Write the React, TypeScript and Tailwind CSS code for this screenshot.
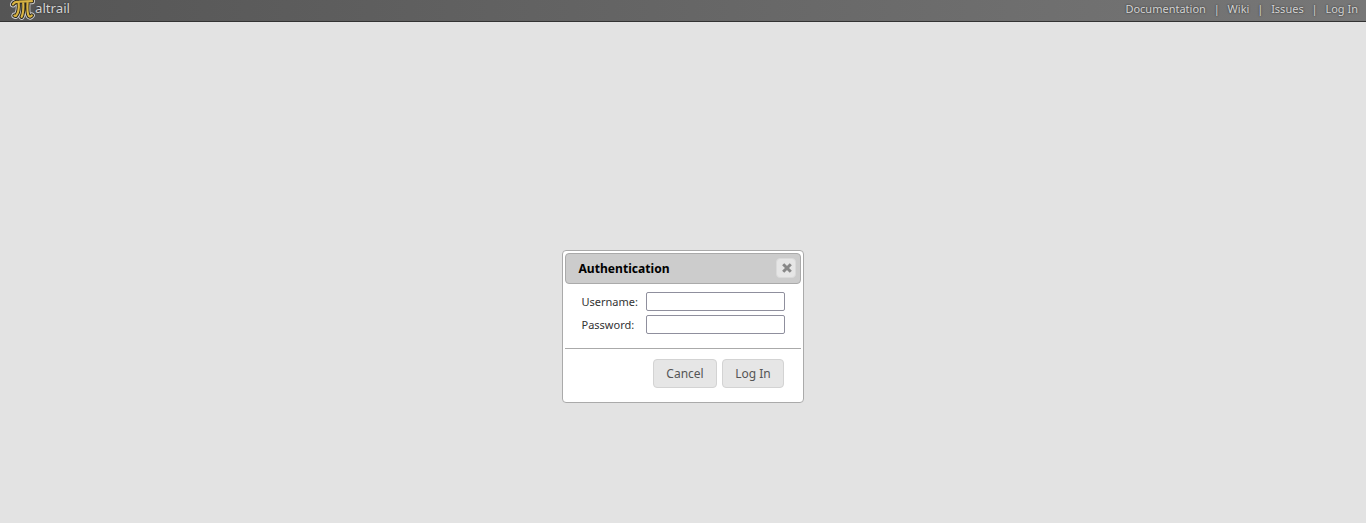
import React from "react";

const links = ["Documentation", "Wiki", "Issues", "Log In"];

function Logo() {
  const d =
    "M3 4.4 C4 2.2 6 1.6 9 1.6 L22 1.2 M8.6 1.8 C9.2 8 8.8 13 5.8 16 L4.4 15.6 M13.2 1.8 C13.6 8 13.6 13 11.6 16.8 M17.6 1.8 C17.2 8 17.2 14.4 19 16.2 C20 17 21 16.6 21.8 15.4";
  return (
    <svg width="26" height="22" viewBox="0 0 26 22" fill="none" strokeLinecap="round" strokeLinejoin="round" className="block shrink-0">
      <path d={d} stroke="#d0d0d0" strokeWidth="6" />
      <path d={d} stroke="#2b271c" strokeWidth="4.2" />
      <path d={d} stroke="#d9b443" strokeWidth="2.2" />
    </svg>
  );
}

function Field({ label, type }: { label: string; type: string }) {
  return (
    <label className="flex h-[19px] items-center text-[11px] text-[#333]">
      <span className="w-[64.5px] pt-px">{label}</span>
      <input type={type} className="h-[19px] w-[139px] rounded-[2px] border border-[#8f8f9d] bg-white px-1 outline-none" />
    </label>
  );
}

function Button({ children, className }: { children: React.ReactNode; className: string }) {
  return (
    <button className={`h-[29px] rounded-[4px] border border-[#d3d3d3] bg-[#e6e6e6] text-[12px] text-[#555] ${className}`}>
      {children}
    </button>
  );
}

export default function App() {
  return (
    <div className="flex h-[523px] flex-col overflow-hidden bg-[#e3e3e3] font-['Noto_Sans',sans-serif]">
      <header className="flex h-[22px] shrink-0 items-start justify-between border-b border-[#333] bg-linear-to-r from-[#555] to-[#777] pr-2 pl-[10px] text-[#d4d4d4] [text-shadow:0_0_2px_#222]">
        <div className="flex items-start">
          <Logo />
          <span className="-ml-px text-[13.2px] leading-[17px]">altrail</span>
        </div>
        <nav className="flex text-[11px] leading-[18px]">
          {links.map((l, i) => (
            <React.Fragment key={l}>
              {i > 0 && <span className="w-[21.75px] text-center">|</span>}
              <a>{l}</a>
            </React.Fragment>
          ))}
        </nav>
      </header>
      <main className="flex justify-center pt-[228px]">
        <section className="h-[153px] w-[242px] rounded-[4px] border border-[#aaa] bg-white p-[2px]">
          <div className="flex h-[31px] items-start justify-between rounded-[4px] border border-[#aaa] bg-[#ccc] pt-1 pr-1 pl-[12.5px]">
            <h1 className="text-[12.1px] leading-[21px] font-bold text-black">Authentication</h1>
            <button className="flex h-5 w-5 items-center justify-center rounded-[4px] border border-[#dadada] bg-[#e6e6e6]" aria-label="Close">
              <svg width="10" height="10" viewBox="0 0 10 10" stroke="#888" strokeWidth="3" className="ml-px">
                <path d="M1.2 1.2 8.8 8.8M8.8 1.2 1.2 8.8" />
              </svg>
            </button>
          </div>
          <form className="flex flex-col gap-1 pt-2 pl-[16.5px]">
            <Field label="Username:" type="text" />
            <Field label="Password:" type="password" />
          </form>
          <div className="mt-[14px] flex justify-end gap-[5px] border-t border-[#aaa] pt-[10px] pr-[17px]">
            <Button className="w-[64px]">Cancel</Button>
            <Button className="w-[62px]">Log In</Button>
          </div>
        </section>
      </main>
    </div>
  );
}
